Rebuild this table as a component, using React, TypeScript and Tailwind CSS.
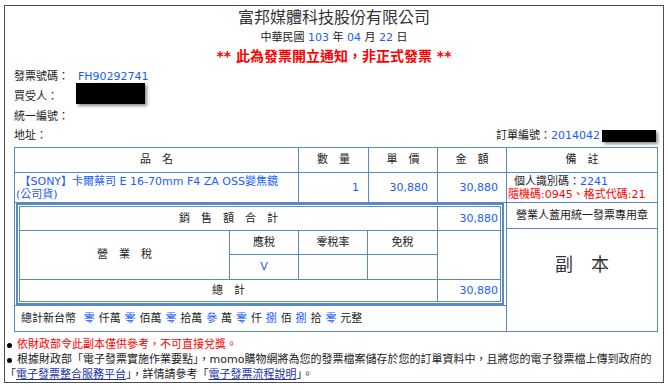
import React from "react";

const BLUE = "text-[#1a5cff]";

function Blue({ children }: { children: React.ReactNode }) {
  return <span className={BLUE}>{children}</span>;
}

function Cell({
  className = "",
  children,
}: {
  className?: string;
  children?: React.ReactNode;
}) {
  return <div className={`bg-white ${className}`}>{children}</div>;
}

export default function App() {
  return (
    <div className="w-[668px] h-[390px] bg-white pt-[5px] pl-[4px] font-['DejaVu_Sans','Noto_Sans_CJK_TC',sans-serif] text-[11px] leading-[14px] text-[#222]">
      <div className="w-[660px] h-[378px] border border-[#4d4d4d] flex flex-col">
        {/* Title */}
        <div className="h-[24px] flex items-center justify-center">
          <p className="text-[16px] leading-[20px] text-[#333]">富邦媒體科技股份有限公司</p>
        </div>
        <div className="h-[15px] flex items-center justify-center">
          <p>
            中華民國 <Blue>103</Blue> 年 <Blue>04</Blue> 月 <Blue>22</Blue> 日
          </p>
        </div>
        <div className="h-[22px] flex items-center justify-center">
          <p className="text-[14px] leading-[18px] font-bold text-[#ff0000]">
            ** 此為發票開立通知，非正式發票 **
          </p>
        </div>

        {/* Info */}
        <div className="pl-[9px] pr-[6px]">
          <div className="h-[20px] flex items-center">
            <span className="w-[64px]">發票號碼：</span>
            <Blue>FH90292741</Blue>
          </div>
          <div className="h-[20px] flex items-center">
            <span className="w-[62px]">買受人：</span>
            <span className="w-[69px] h-[21px] -mt-[7px] bg-black shadow-[2px_2px_3px_rgba(0,0,0,0.45)]" />
          </div>
          <div className="h-[20px] flex items-center">
            <span>統一編號：</span>
          </div>
          <div className="h-[18px] flex items-center">
            <span>地址：</span>
            <span className="ml-auto">
              訂單編號：<Blue>2014042</Blue>
            </span>
            <span className="w-[54px] h-[12px] ml-[2px] mr-[1px] bg-black shadow-[2px_2px_3px_rgba(0,0,0,0.45)]" />
          </div>
        </div>

        {/* Table */}
        <div className="ml-[9px] mt-[2px] w-[644px] grid grid-cols-[283px_69px_68px_68px_150px] grid-rows-[24px_29px_25px_76px_25px] gap-px p-px bg-[#5a8ac6]">
          <Cell className="flex items-center justify-center">品　名</Cell>
          <Cell className="flex items-center justify-center">數　量</Cell>
          <Cell className="flex items-center justify-center">單　價</Cell>
          <Cell className="flex items-center justify-center">金　額</Cell>
          <Cell className="flex items-center justify-center">備　註</Cell>

          <Cell className={`flex flex-col justify-center pl-[1px] leading-[13px] ${BLUE}`}>
            <p>
              &nbsp;【SONY】卡爾蔡司 E 16-70mm F4 ZA OSS變焦鏡
              <br />
              (公司貨)
            </p>
          </Cell>
          <Cell className={`flex items-center justify-end pr-[9px] ${BLUE}`}>1</Cell>
          <Cell className={`flex items-center justify-end pr-[9px] ${BLUE}`}>30,880</Cell>
          <Cell className={`flex items-center justify-end pr-[8px] ${BLUE}`}>30,880</Cell>
          <Cell className="flex flex-col justify-center leading-[13px]">
            <p className="pl-[7px]">
              個人識別碼：<Blue>2241</Blue>
            </p>
            <p className="pl-[1px] text-[#ff0000]">隨機碼:0945、格式代碼:21</p>
          </Cell>

          {/* inner box */}
          <Cell className="col-start-1 col-span-4 row-start-3 row-span-2 pl-px pr-[2px]">
            <div className="h-full border-2 border-[#5a8ac6] p-px">
              <div className="h-full grid grid-cols-[209px_68px_68px_69px_62px] grid-rows-[23px_23px_24px_21px] gap-px p-px bg-[#5a8ac6]">
                <Cell className="col-start-1 col-span-4 row-start-1 flex items-center justify-center">
                  銷　售　額　合　計
                </Cell>
                <Cell className={`col-start-5 row-start-1 flex items-center justify-end pr-[2px] ${BLUE}`}>
                  30,880
                </Cell>
                <Cell className="col-start-1 row-start-2 row-span-2 flex items-center justify-center">
                  營　業　稅
                </Cell>
                <Cell className="col-start-2 row-start-2 flex items-center justify-center">應稅</Cell>
                <Cell className="col-start-3 row-start-2 flex items-center justify-center">零稅率</Cell>
                <Cell className="col-start-4 row-start-2 flex items-center justify-center">免稅</Cell>
                <Cell className="col-start-5 row-start-2 row-span-2" />
                <Cell className={`col-start-2 row-start-3 flex items-center justify-center ${BLUE}`}>V</Cell>
                <Cell className="col-start-3 row-start-3" />
                <Cell className="col-start-4 row-start-3" />
                <Cell className="col-start-1 col-span-4 row-start-4 flex items-center justify-center">
                  總　計
                </Cell>
                <Cell className={`col-start-5 row-start-4 flex items-center justify-end pr-[2px] ${BLUE}`}>
                  30,880
                </Cell>
              </div>
            </div>
          </Cell>

          <Cell className="col-start-5 row-start-3 flex items-center justify-center">
            營業人蓋用統一發票專用章
          </Cell>
          <Cell className="col-start-5 row-start-4 row-span-2 flex justify-center pt-[25px]">
            <p className="text-[18px] leading-[22px] text-[#333]">副　本</p>
          </Cell>

          <Cell className="col-start-1 col-span-4 row-start-5 flex items-center pl-[6px]">
            <p className="[word-spacing:0.4px]">
              總計新台幣&nbsp; <Blue>零</Blue> 仟萬 <Blue>零</Blue> 佰萬 <Blue>零</Blue> 拾萬{" "}
              <Blue>參</Blue> 萬 <Blue>零</Blue> 仟 <Blue>捌</Blue> 佰 <Blue>捌</Blue> 拾{" "}
              <Blue>零</Blue> 元整
            </p>
          </Cell>
        </div>

        {/* Notes */}
        <div className="mt-[5px] pr-[1px] leading-[15px]">
          <p>
            <span className="inline-block w-[5px] h-[5px] rounded-full bg-black ml-[2px] mr-[5px] align-middle" />
            <span className="text-[#ff0000]">依財政部令此副本僅供參考，不可直接兌獎。</span>
          </p>
          <p>
            <span className="inline-block w-[5px] h-[5px] rounded-full bg-black ml-[2px] mr-[5px] align-middle" />
            根據財政部「電子發票實施作業要點」，momo購物網將為您的發票檔案儲存於您的訂單資料中，且將您的電子發票檔上傳到政府的「
            <span className="text-[#2233aa] underline">電子發票整合服務平台</span>
            」，詳情請參考「
            <span className="text-[#2233aa] underline">電子發票流程說明</span>」。
          </p>
        </div>
      </div>
    </div>
  );
}
